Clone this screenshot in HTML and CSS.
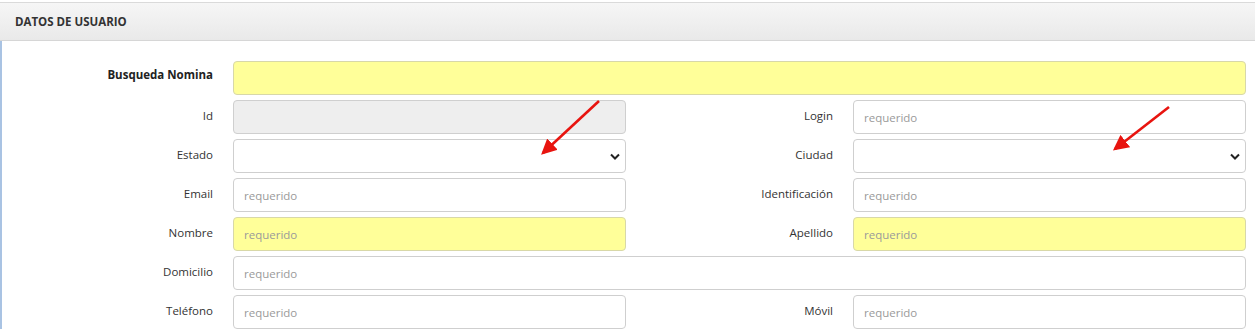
FILE: index.html
```html
<!DOCTYPE html>
<html lang="es">
<head>
    <meta charset="UTF-8">
    <title>Datos de Usuario</title>
    <link rel="stylesheet" href="styles.css">
</head>
<body>
    <div class="panel">
        <!-- Panel header -->
        <div class="panel-heading">DATOS DE USUARIO</div>

        <div class="panel-body">
            <form class="user-form">
                <label class="lbl lbl-bold" for="busqueda">Busqueda Nomina</label>
                <input class="field field-yellow span-3" type="text" id="busqueda">

                <label class="lbl" for="id">Id</label>
                <input class="field field-disabled" type="text" id="id" disabled>
                <label class="lbl" for="login">Login</label>
                <input class="field" type="text" id="login" placeholder="requerido">

                <label class="lbl" for="estado">Estado</label>
                <select class="field field-select" id="estado"><option></option></select>
                <label class="lbl" for="ciudad">Ciudad</label>
                <select class="field field-select" id="ciudad"><option></option></select>

                <label class="lbl" for="email">Email</label>
                <input class="field" type="text" id="email" placeholder="requerido">
                <label class="lbl" for="ident">Identificación</label>
                <input class="field" type="text" id="ident" placeholder="requerido">

                <label class="lbl" for="nombre">Nombre</label>
                <input class="field field-yellow" type="text" id="nombre" placeholder="requerido">
                <label class="lbl" for="apellido">Apellido</label>
                <input class="field field-yellow" type="text" id="apellido" placeholder="requerido">

                <label class="lbl" for="domicilio">Domicilio</label>
                <input class="field span-3" type="text" id="domicilio" placeholder="requerido">

                <label class="lbl" for="telefono">Teléfono</label>
                <input class="field" type="text" id="telefono" placeholder="requerido">
                <label class="lbl" for="movil">Móvil</label>
                <input class="field" type="text" id="movil" placeholder="requerido">
            </form>
        </div>
    </div>

    <!-- Annotation arrows -->
    <svg class="annotations" width="1255" height="332" viewBox="0 0 1255 332">
        <defs>
            <marker id="head" markerWidth="6" markerHeight="6" refX="5" refY="3" orient="auto" markerUnits="strokeWidth">
                <path d="M0,0 L6,3 L0,6 Z" fill="#e8140f"/>
            </marker>
        </defs>
        <line x1="599" y1="101" x2="543" y2="153" stroke="#e8140f" stroke-width="2.6" marker-end="url(#head)"/>
        <line x1="1169" y1="107" x2="1115" y2="149" stroke="#e8140f" stroke-width="2.6" marker-end="url(#head)"/>
    </svg>
</body>
</html>
```

FILE: styles.css
```css
* {
    margin: 0;
    padding: 0;
    box-sizing: border-box;
}

body {
    font-family: 'Open Sans', 'Liberation Sans', sans-serif;
    background: white;
    color: #333;
    padding-top: 2px;
}

/* Panel */
.panel {
    border-left: 2px solid #a9c3e3;
}

.panel-heading {
    height: 39px;
    line-height: 38px;
    padding-left: 15px;
    font-size: 11.5px;
    font-weight: 700;
    color: #333;
    background: linear-gradient(#f6f6f6, #e9e9e9);
    border-top: 1px solid #dadada;
    border-bottom: 1px solid #d6d6d6;
    margin-left: -2px;
}

.panel-body {
    padding: 20px 9px 0 0;
}

/* Form grid */
.user-form {
    display: grid;
    grid-template-columns: 231px 393px 227px 393px;
    row-gap: 5px;
}

.lbl {
    font-size: 11.5px;
    text-align: right;
    padding-right: 20px;
    padding-top: 8px;
    color: #333;
}

.lbl-bold {
    font-weight: 700;
    color: #222;
    padding-top: 6px;
}

.field {
    height: 34px;
    border: 1px solid #cfcfcf;
    border-radius: 4px;
    background: white;
    font-family: inherit;
    font-size: 11.5px;
    padding: 0 10px;
    color: #333;
}

.field::placeholder {
    color: #9a9a9a;
}

.field-yellow {
    background: #ffff99;
    border-color: #d8d8a8;
}

.field-disabled {
    background: #eeeeee;
}

.field-select {
    appearance: none;
    background: white url("data:image/svg+xml,%3Csvg xmlns='http://www.w3.org/2000/svg' width='10' height='7' viewBox='0 0 10 7'%3E%3Cpath d='M1 1.5 L5 5.5 L9 1.5' fill='none' stroke='%23222' stroke-width='2'/%3E%3C/svg%3E") no-repeat right 5px center;
}

.span-3 {
    grid-column: span 3;
}

/* Annotation overlay */
.annotations {
    position: absolute;
    top: 0;
    left: 0;
    pointer-events: none;
}
```
